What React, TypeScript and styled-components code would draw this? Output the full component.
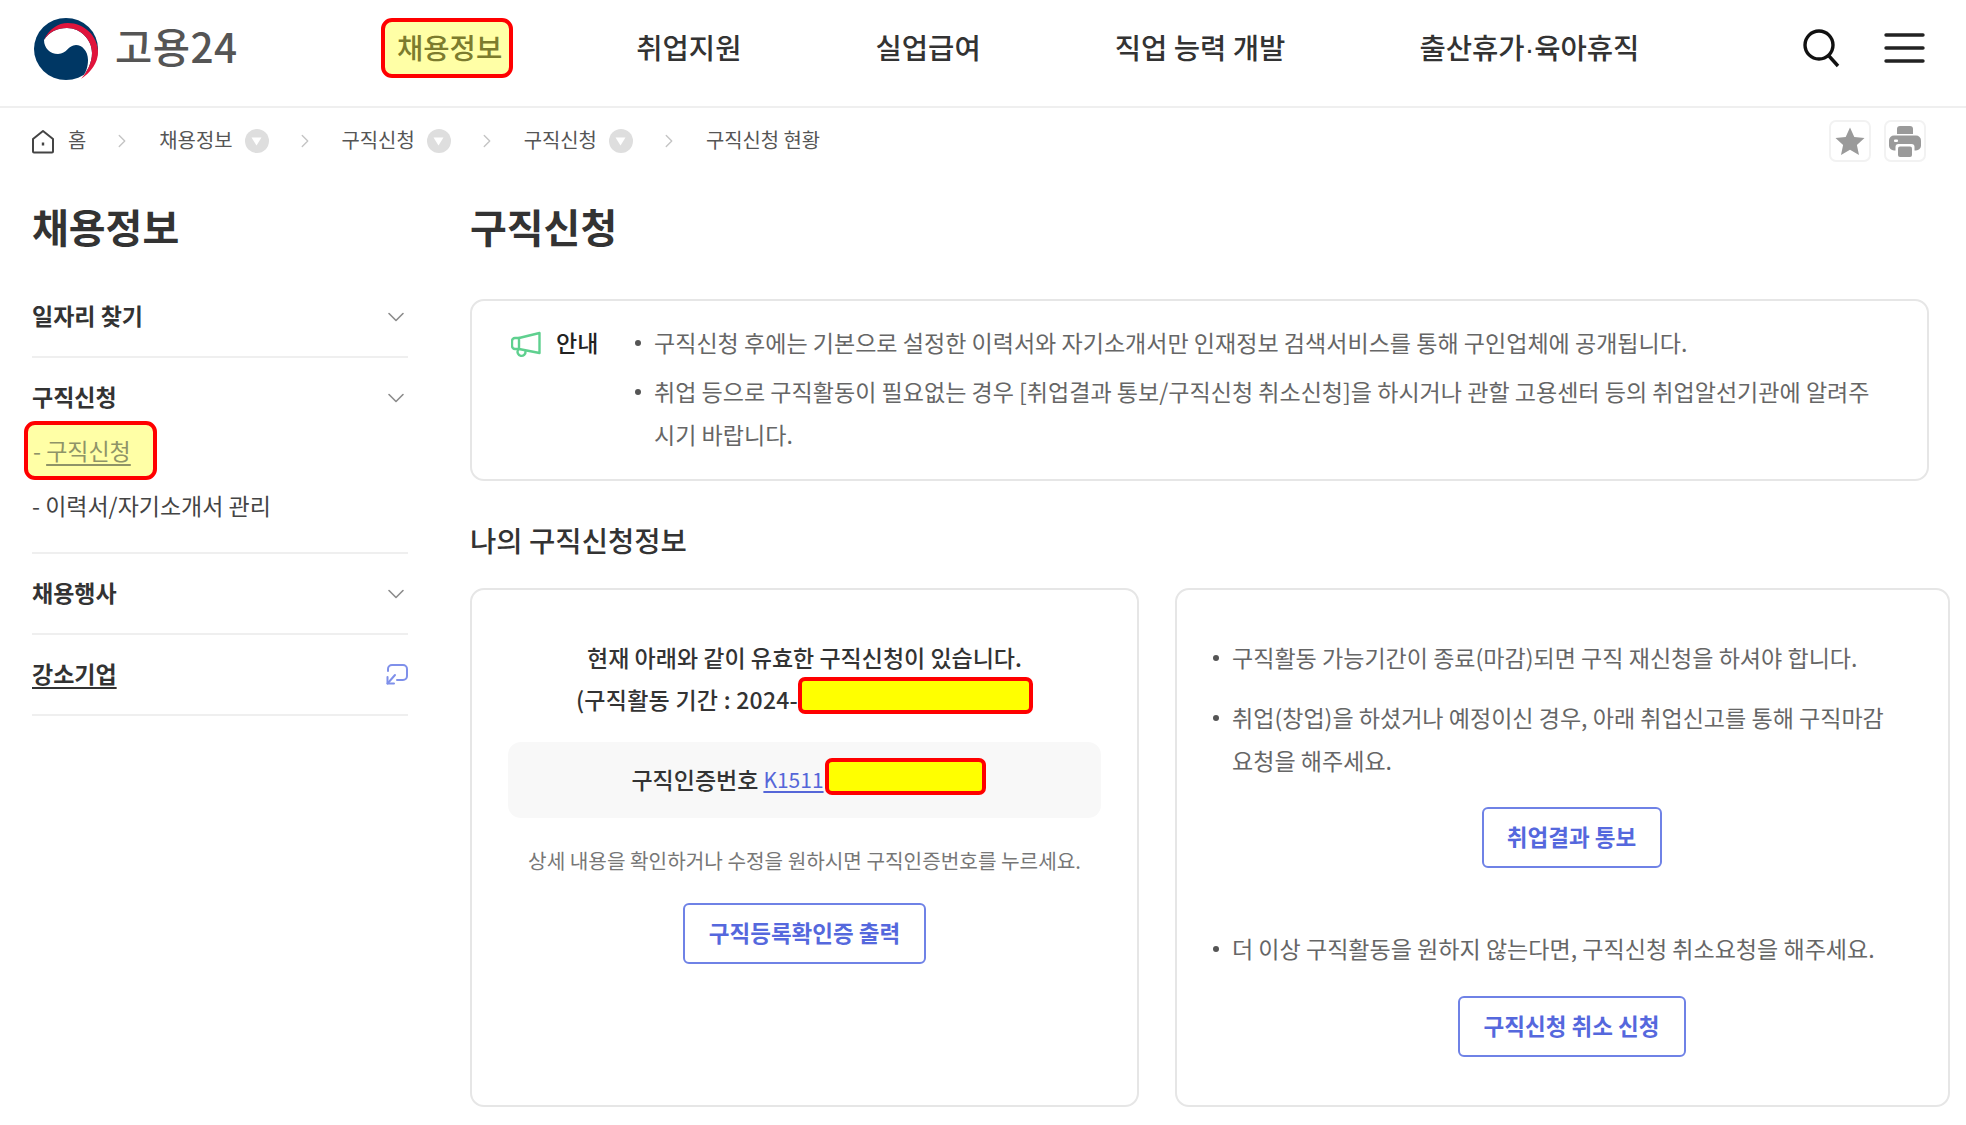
import React from "react";
import styled, { createGlobalStyle } from "styled-components";
import { ChevronDown, ChevronRight } from "lucide-react";

const GlobalStyle = createGlobalStyle`
  html, body {
    margin: 0;
    padding: 0;
    background: #fff;
    overflow: hidden;
  }
  body {
    font-family: "Noto Sans CJK KR", "Noto Sans", sans-serif;
    color: #333;
  }
  * {
    box-sizing: border-box;
  }
`;

const Page = styled.div`
  width: 1966px;
  height: 1125px;
  overflow: hidden;
`;

/* header */
const HeaderBar = styled.header`
  display: flex;
  align-items: center;
  height: 108px;
  padding: 0 41px 10px 34px;
  border-bottom: 2px solid #efefef;
`;

const LogoLink = styled.div`
  display: flex;
  align-items: center;
  gap: 17px;
  width: 363px;
  margin-top: -3px;
`;

const EmblemWrap = styled.span`
  display: block;
  margin-top: 5px;
  line-height: 0;
`;

const LogoText = styled.span`
  font-size: 40.5px;
  font-weight: 500;
  color: #555;
  letter-spacing: 0.5px;
  line-height: 1;
`;

const Nav = styled.nav`
  display: flex;
  gap: 134px;
  flex: 1;
`;

const NavItem = styled.a<{ $marked?: boolean }>`
  position: relative;
  z-index: 0;
  font-size: 28.6px;
  font-weight: 500;
  line-height: 40px;
  white-space: nowrap;
  color: ${({ $marked }) => ($marked ? "#7c7c2e" : "#333")};

  ${({ $marked }) =>
    $marked &&
    `
    &::before {
      content: "";
      position: absolute;
      z-index: -1;
      inset: -9px -11px -9px -16px;
      background: #ffffa6;
      border: 4px solid #ff0000;
      border-radius: 11px;
    }
  `}
`;

const NavDot = styled.span`
  font-family: "Liberation Sans", sans-serif;
`;

const HeaderIcons = styled.div`
  display: flex;
  align-items: center;
  gap: 44px;
`;

/* breadcrumb */
const CrumbBar = styled.div`
  display: flex;
  align-items: center;
  justify-content: space-between;
  height: 66px;
  padding: 0 40px 0 31px;
`;

const CrumbList = styled.div`
  display: flex;
  align-items: center;
`;

const CrumbText = styled.span`
  font-size: 19.9px;
  line-height: 28px;
  margin-top: -2px;
  color: #555;
  white-space: nowrap;
`;

const HomeText = styled(CrumbText)`
  margin-left: 13px;
`;

const CrumbDot = styled.span`
  display: flex;
  align-items: center;
  justify-content: center;
  width: 24px;
  height: 24px;
  margin-left: 12px;
  border-radius: 50%;
  background: #dedede;
`;

const CrumbSep = styled(ChevronRight)`
  color: #c4c4c4;
  margin: 0 26px 0 25px;
`;

const ToolGroup = styled.div`
  display: flex;
  gap: 13px;
`;

const ToolButton = styled.button`
  display: flex;
  align-items: center;
  justify-content: center;
  width: 42px;
  height: 42px;
  padding: 0;
  background: #fff;
  border: 2px solid #f2f2f2;
  border-radius: 7px;
`;

/* body */
const Content = styled.div`
  display: flex;
  padding: 27px 0 0 32px;
`;

const Side = styled.aside`
  width: 376px;
  flex: none;
  margin-right: 62px;
`;

const PageTitle = styled.h1`
  margin: 0;
  font-size: 40px;
  font-weight: 700;
  line-height: 50px;
  color: #333;
  white-space: nowrap;
`;

const SideList = styled.div`
  margin-top: 26px;
`;

const SideGroup = styled.div`
  padding: 22px 0 25px;
  border-bottom: 2px solid #efefef;
`;

const SideHead = styled.div`
  display: flex;
  align-items: center;
  justify-content: space-between;
  height: 32px;
`;

const SideLabel = styled.span<{ $link?: boolean }>`
  font-size: 23px;
  font-weight: 700;
  color: #333;
  text-decoration: ${({ $link }) => ($link ? "underline" : "none")};
  text-underline-offset: 4px;
`;

const SideChevron = styled(ChevronDown)`
  color: #8c8c8c;
  margin: 3px -2px 0 0;
`;

const LinkIconWrap = styled.span`
  display: block;
  margin-top: 3px;
  line-height: 0;
`;

const SubList = styled.div`
  display: flex;
  flex-direction: column;
  align-items: flex-start;
  padding-bottom: 6px;
`;

const SubItem = styled.div<{ $marked?: boolean }>`
  font-size: 23px;
  line-height: 32px;
  margin-top: 9px;
  color: #444;

  ${({ $marked }) =>
    $marked &&
    `
    width: 133px;
    height: 59px;
    margin: 9px 0 0 -8px;
    padding: 9px 0 0 5px;
    background: #ffffa6;
    border: 4px solid #ff0000;
    border-radius: 11px;
    color: #8f9468;
    white-space: nowrap;
  `}

  u {
    text-underline-offset: 4px;
  }
`;

const Main = styled.main`
  width: 1480px;
  flex: none;
`;

const Notice = styled.div`
  display: flex;
  width: 1459px;
  height: 182px;
  margin-top: 48px;
  padding: 20px 40px 0 39px;
  border: 2px solid #e6e6e6;
  border-radius: 14px;
`;

const NoticeHead = styled.div`
  display: flex;
  align-items: flex-start;
  width: 124px;
  flex: none;
  gap: 15px;
`;

const NoticeIcon = styled.span`
  display: block;
  margin-top: 10px;
  line-height: 0;
`;

const NoticeLabel = styled.span`
  margin-top: 1px;
  font-size: 23px;
  font-weight: 500;
  line-height: 40px;
  color: #222;
`;

const Bullets = styled.ul`
  margin: 0;
  padding: 0;
  list-style: none;
  flex: 1;
`;

const Bullet = styled.li<{ $gap?: number }>`
  position: relative;
  padding-left: 19px;
  margin-top: ${({ $gap }) => $gap ?? 0}px;
  font-size: 23.05px;
  line-height: 43px;
  color: #666;
  white-space: nowrap;

  &::before {
    content: "";
    position: absolute;
    left: 0;
    top: 19px;
    width: 6px;
    height: 6px;
    border-radius: 50%;
    background: #555;
  }
`;

const SectionTitle = styled.h2`
  margin: 39px 0 0;
  font-size: 28.6px;
  font-weight: 500;
  line-height: 40px;
  color: #333;
`;

const CardRow = styled.div`
  display: grid;
  grid-template-columns: 669px 775px;
  gap: 36px;
  margin-top: 28px;
`;

const Card = styled.section`
  height: 519px;
  border: 2px solid #e6e6e6;
  border-radius: 14px;
`;

const StatusCard = styled(Card)`
  display: flex;
  flex-direction: column;
  align-items: center;
  padding: 46px 36px 0;
`;

const GuideCard = styled(Card)`
  padding: 46px 18px 0 36px;
`;

const StatusLine = styled.div<{ $spread?: boolean }>`
  font-size: 23px;
  font-weight: 500;
  line-height: 42px;
  letter-spacing: ${({ $spread }) => ($spread ? "0.25px" : "0")};
  color: #333;
  white-space: nowrap;
  text-align: center;
`;

const Redact = styled.span<{ $width: number }>`
  position: relative;
  top: -7px;
  display: inline-block;
  vertical-align: middle;
  width: ${({ $width }) => $width}px;
  height: 37px;
  background: #ffff00;
  border: 4px solid #ff0000;
  border-radius: 7px;
`;

const NumberBox = styled.div`
  display: flex;
  align-items: center;
  justify-content: center;
  width: 593px;
  height: 76px;
  margin-top: 21px;
  padding: 0 0 2px 8px;
  background: #f8f8f8;
  border-radius: 13px;
  font-size: 23px;
  font-weight: 500;
  color: #333;
  white-space: nowrap;
`;

const NumberLink = styled.a`
  margin-left: 5px;
  font-size: 21px;
  font-weight: 400;
  color: #5566d8;
  text-decoration: underline;
  text-underline-offset: 3px;
`;

const NumberRedact = styled(Redact)`
  top: -3px;
  margin-left: 1px;
`;

const Hint = styled.p`
  margin: 27px 0 0;
  font-size: 20.2px;
  line-height: 32px;
  color: #777;
  white-space: nowrap;
`;

const ActionButton = styled.button<{ $width: number; $top: number }>`
  display: block;
  width: ${({ $width }) => $width}px;
  height: 61px;
  margin: ${({ $top }) => $top}px auto 0;
  padding: 0 0 3px;
  background: #fff;
  border: 2px solid #6f82e6;
  border-radius: 6px;
  font-family: inherit;
  font-size: 22.5px;
  font-weight: 700;
  color: #5568dd;
  white-space: nowrap;
`;

const EmblemLogo = () => (
  <svg width="64" height="62" viewBox="0 0 64 62">
    <ellipse cx="32" cy="31" rx="32" ry="31" fill="#003764" />
    <path
      d="M10 22C15 14 23 10 33 10C47 10 58 22 58 35C58 45 53 54 47 61C52 55 54 49 54 42C54 33 48 27 42 27C34 27 33 36 24 36C16 36 10 30 10 22Z"
      fill="#fff"
    />
    <path
      d="M10 22C15 11 24 5 34 5C50 5 64 18 64 34C64 45 57 54 47 61C53 54 58 45 58 35C58 22 47 10 33 10C23 10 15 14 10 22Z"
      fill="#e0143c"
    />
  </svg>
);

const SearchIcon = () => (
  <svg width="38" height="40" viewBox="0 0 38 40" fill="none" stroke="#111" strokeWidth="3.4">
    <circle cx="17" cy="17" r="14" />
    <path d="M27 28l9 10" />
  </svg>
);

const MenuIcon = () => (
  <svg width="41" height="30" viewBox="0 0 41 30" fill="none" stroke="#222" strokeWidth="3.4" strokeLinecap="round">
    <path d="M2 2h37M2 15h37M2 28h37" />
  </svg>
);

const HomeIcon = () => (
  <svg width="24" height="25" viewBox="0 0 24 25" fill="none" stroke="#444" strokeWidth="2" strokeLinejoin="round">
    <path d="M2 10L12 2l10 8v12.5a1 1 0 0 1-1 1H3a1 1 0 0 1-1-1z" />
    <path d="M12 13.5v3" strokeWidth="2.4" />
  </svg>
);

const DotArrow = () => (
  <svg width="11" height="9" viewBox="0 0 11 9">
    <path d="M0.5 0.5h10L5.5 8.5z" fill="#fff" />
  </svg>
);

const StarIcon = () => (
  <svg width="30" height="28" viewBox="0 0 30 28">
    <path d="M15 0.5l4.3 9.4 10.2 1.1-7.6 6.9 2.1 10.1L15 22.8l-9 5.2 2.1-10.1L0.5 11l10.2-1.1z" fill="#9a9a9a" />
  </svg>
);

const PrintIcon = () => (
  <svg width="32" height="31" viewBox="0 0 32 31">
    <path d="M8 8V3a3 3 0 0 1 3-3h10a3 3 0 0 1 3 3v5z" fill="#9a9a9a" />
    <rect x="0" y="9.5" width="32" height="15" rx="5" fill="#9a9a9a" />
    <rect x="5" y="13.5" width="4" height="2.5" rx="1" fill="#fff" />
    <rect x="6.5" y="18" width="19" height="13" rx="3" fill="#fff" />
    <rect x="9" y="20.5" width="14" height="10.5" rx="2" fill="#9a9a9a" />
  </svg>
);

const MegaphoneIcon = () => (
  <svg width="30" height="27" viewBox="0 0 30 27" fill="none" stroke="#5fd08f" strokeWidth="2.4" strokeLinejoin="round" strokeLinecap="round">
    <path d="M8 7L28.5 2V22L8 18Z" />
    <path d="M8 7H4a3 3 0 0 0-3 3v5a3 3 0 0 0 3 3h4" />
    <path d="M7 19a4 4 0 1 0 7.5 1.5" />
  </svg>
);

const ExternalIcon = () => (
  <svg width="22" height="22" viewBox="0 0 22 22" fill="none" stroke="#7f90ea" strokeWidth="2" strokeLinecap="round" strokeLinejoin="round">
    <path d="M2 7V5a4 4 0 0 1 4-4h11a4 4 0 0 1 4 4v7a4 4 0 0 1-4 4h-6" />
    <path d="M9 11L1.5 19.5" />
    <path d="M1.5 13v6.5H8" />
  </svg>
);

const navItems = ["취업지원", "실업급여", "직업 능력 개발"];
const crumbs = ["채용정보", "구직신청", "구직신청"];

const App = () => (
  <Page>
    <GlobalStyle />
    <HeaderBar>
      <LogoLink>
        <EmblemWrap>
          <EmblemLogo />
        </EmblemWrap>
        <LogoText>고용24</LogoText>
      </LogoLink>
      <Nav>
        <NavItem $marked>채용정보</NavItem>
        {navItems.map((item) => (
          <NavItem key={item}>{item}</NavItem>
        ))}
        <NavItem>
          출산휴가<NavDot>·</NavDot>육아휴직
        </NavItem>
      </Nav>
      <HeaderIcons>
        <SearchIcon />
        <MenuIcon />
      </HeaderIcons>
    </HeaderBar>

    <CrumbBar>
      <CrumbList>
        <HomeIcon />
        <HomeText>홈</HomeText>
        <CrumbSep size={22} strokeWidth={1.5} />
        {crumbs.map((crumb, i) => (
          <React.Fragment key={i}>
            <CrumbText>{crumb}</CrumbText>
            <CrumbDot>
              <DotArrow />
            </CrumbDot>
            <CrumbSep size={22} strokeWidth={1.5} />
          </React.Fragment>
        ))}
        <CrumbText>구직신청 현황</CrumbText>
      </CrumbList>
      <ToolGroup>
        <ToolButton>
          <StarIcon />
        </ToolButton>
        <ToolButton>
          <PrintIcon />
        </ToolButton>
      </ToolGroup>
    </CrumbBar>

    <Content>
      <Side>
        <PageTitle>채용정보</PageTitle>
        <SideList>
          <SideGroup>
            <SideHead>
              <SideLabel>일자리 찾기</SideLabel>
              <SideChevron size={28} strokeWidth={1.4} />
            </SideHead>
          </SideGroup>
          <SideGroup>
            <SideHead>
              <SideLabel>구직신청</SideLabel>
              <SideChevron size={28} strokeWidth={1.4} />
            </SideHead>
            <SubList>
              <SubItem $marked>
                - <u>구직신청</u>
              </SubItem>
              <SubItem>- 이력서/자기소개서 관리</SubItem>
            </SubList>
          </SideGroup>
          <SideGroup>
            <SideHead>
              <SideLabel>채용행사</SideLabel>
              <SideChevron size={28} strokeWidth={1.4} />
            </SideHead>
          </SideGroup>
          <SideGroup>
            <SideHead>
              <SideLabel $link>강소기업</SideLabel>
              <LinkIconWrap>
                <ExternalIcon />
              </LinkIconWrap>
            </SideHead>
          </SideGroup>
        </SideList>
      </Side>

      <Main>
        <PageTitle>구직신청</PageTitle>
        <Notice>
          <NoticeHead>
            <NoticeIcon>
              <MegaphoneIcon />
            </NoticeIcon>
            <NoticeLabel>안내</NoticeLabel>
          </NoticeHead>
          <Bullets>
            <Bullet>구직신청 후에는 기본으로 설정한 이력서와 자기소개서만 인재정보 검색서비스를 통해 구인업체에 공개됩니다.</Bullet>
            <Bullet $gap={6}>
              취업 등으로 구직활동이 필요없는 경우 [취업결과 통보/구직신청 취소신청]을 하시거나 관할 고용센터 등의 취업알선기관에 알려주
              <br />
              시기 바랍니다.
            </Bullet>
          </Bullets>
        </Notice>

        <SectionTitle>나의 구직신청정보</SectionTitle>
        <CardRow>
          <StatusCard>
            <StatusLine>현재 아래와 같이 유효한 구직신청이 있습니다.</StatusLine>
            <StatusLine $spread>
              (구직활동 기간 : 2024-
              <Redact $width={235} />
            </StatusLine>
            <NumberBox>
              구직인증번호
              <NumberLink>K1511</NumberLink>
              <NumberRedact $width={161} />
            </NumberBox>
            <Hint>상세 내용을 확인하거나 수정을 원하시면 구직인증번호를 누르세요.</Hint>
            <ActionButton $width={243} $top={26}>구직등록확인증 출력</ActionButton>
          </StatusCard>
          <GuideCard>
            <Bullets>
              <Bullet>구직활동 가능기간이 종료(마감)되면 구직 재신청을 하셔야 합니다.</Bullet>
              <Bullet $gap={17}>
                취업(창업)을 하셨거나 예정이신 경우, 아래 취업신고를 통해 구직마감
                <br />
                요청을 해주세요.
              </Bullet>
            </Bullets>
            <ActionButton $width={180} $top={25}>취업결과 통보</ActionButton>
            <Bullets>
              <Bullet $gap={59}>더 이상 구직활동을 원하지 않는다면, 구직신청 취소요청을 해주세요.</Bullet>
            </Bullets>
            <ActionButton $width={228} $top={26}>구직신청 취소 신청</ActionButton>
          </GuideCard>
        </CardRow>
      </Main>
    </Content>
  </Page>
);

export default App;
